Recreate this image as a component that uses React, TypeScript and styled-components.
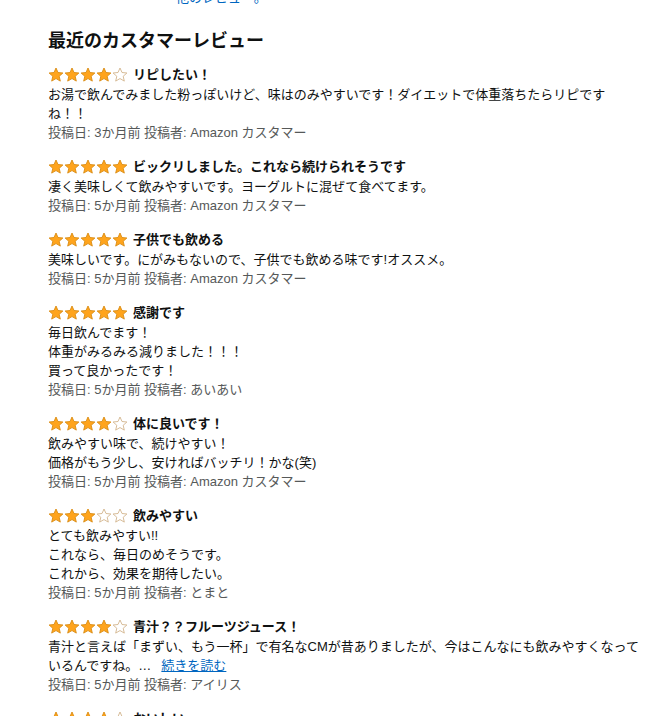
import React from "react";
import styled, { createGlobalStyle } from "styled-components";

const GlobalStyle = createGlobalStyle`
  html, body {
    margin: 0;
    padding: 0;
    background: #ffffff;
  }
  body {
    font-family: "Liberation Sans", "Noto Sans CJK JP", sans-serif;
    color: #0f1111;
    overflow: hidden;
  }
`;

const Page = styled.div`
  width: 646px;
  height: 716px;
  overflow: hidden;
`;

const TopLink = styled.a`
  display: block;
  margin-top: -12px;
  padding-left: 176px;
  font-size: 13px;
  line-height: 19px;
  color: #0066c0;
  text-decoration: none;
`;

const Section = styled.section`
  padding: 0 0 0 48px;
  width: 592px;
`;

const Heading = styled.h2`
  margin: 22px 0 11px;
  font-size: 18px;
  line-height: 24px;
  font-weight: 700;
  color: #0f1111;
`;

const ReviewList = styled.div`
  display: flex;
  flex-direction: column;
  gap: 14px;
`;

const Review = styled.article`
  display: flex;
  flex-direction: column;
`;

const TitleRow = styled.div`
  display: flex;
  align-items: center;
  gap: 5px;
  height: 21px;
`;

const Stars = styled.span`
  display: inline-flex;
  align-items: center;
`;

const Title = styled.span`
  font-size: 13px;
  line-height: 19px;
  font-weight: 700;
`;

const Body = styled.p`
  margin: 0;
  font-size: 13px;
  line-height: 19px;
  white-space: pre-line;
  line-break: strict;
`;

const ReadMore = styled.a`
  margin-left: 10px;
  color: #0066c0;
  text-decoration: underline;
`;

const Meta = styled.div`
  font-size: 13px;
  line-height: 19px;
  color: #565959;
`;

const Star: React.FC<{ filled: boolean }> = ({ filled }) => (
  <svg width="16" height="16" viewBox="0 0 16 16">
    <path
      d="M8 1 L10 5.5 L14.9 6 L11.2 9.25 L12.3 14.1 L8 11.55 L3.7 14.1 L4.8 9.25 L1.1 6 L6 5.5 Z"
      fill={filled ? "#ffa41c" : "#ffffff"}
      stroke={filled ? "#d98c14" : "#d2b48c"}
      strokeWidth="0.9"
      strokeLinejoin="round"
    />
  </svg>
);

const Rating: React.FC<{ value: number }> = ({ value }) => (
  <Stars>
    {[0, 1, 2, 3, 4].map((i) => (
      <Star key={i} filled={i < value} />
    ))}
  </Stars>
);

interface ReviewData {
  rating: number;
  title: string;
  body: string;
  date: string;
  author: string;
  more?: boolean;
}

const reviews: ReviewData[] = [
  {
    rating: 4,
    title: "リピしたい！",
    body: "お湯で飲んでみました粉っぽいけど、味はのみやすいです！ダイエットで体重落ちたらリピですね！！",
    date: "3か月前",
    author: "Amazon カスタマー",
  },
  {
    rating: 5,
    title: "ビックリしました。これなら続けられそうです",
    body: "凄く美味しくて飲みやすいです。ヨーグルトに混ぜて食べてます。",
    date: "5か月前",
    author: "Amazon カスタマー",
  },
  {
    rating: 5,
    title: "子供でも飲める",
    body: "美味しいです。にがみもないので、子供でも飲める味です!オススメ。",
    date: "5か月前",
    author: "Amazon カスタマー",
  },
  {
    rating: 5,
    title: "感謝です",
    body: "毎日飲んでます！\n体重がみるみる減りました！！！\n買って良かったです！",
    date: "5か月前",
    author: "あいあい",
  },
  {
    rating: 4,
    title: "体に良いです！",
    body: "飲みやすい味で、続けやすい！\n価格がもう少し、安ければバッチリ！かな(笑)",
    date: "5か月前",
    author: "Amazon カスタマー",
  },
  {
    rating: 3,
    title: "飲みやすい",
    body: "とても飲みやすい!!\nこれなら、毎日のめそうです。\nこれから、効果を期待したい。",
    date: "5か月前",
    author: "とまと",
  },
  {
    rating: 4,
    title: "青汁？？フルーツジュース！",
    body: "青汁と言えば「まずい、もう一杯」で有名なCMが昔ありましたが、今はこんなにも飲みやすくなっているんですね。…",
    date: "5か月前",
    author: "アイリス",
    more: true,
  },
  {
    rating: 4,
    title: "おいしい",
    body: "",
    date: "",
    author: "",
  },
];

export default function App() {
  return (
    <Page>
      <GlobalStyle />
      <TopLink href="#">他のレビュー。</TopLink>
      <Section>
        <Heading>最近のカスタマーレビュー</Heading>
        <ReviewList>
          {reviews.map((r, i) => (
            <Review key={i}>
              <TitleRow>
                <Rating value={r.rating} />
                <Title>{r.title}</Title>
              </TitleRow>
              {r.body && (
                <Body>
                  {r.body}
                  {r.more && <ReadMore href="#">続きを読む</ReadMore>}
                </Body>
              )}
              {r.date && (
                <Meta>
                  投稿日: {r.date} 投稿者: {r.author}
                </Meta>
              )}
            </Review>
          ))}
        </ReviewList>
      </Section>
    </Page>
  );
}
